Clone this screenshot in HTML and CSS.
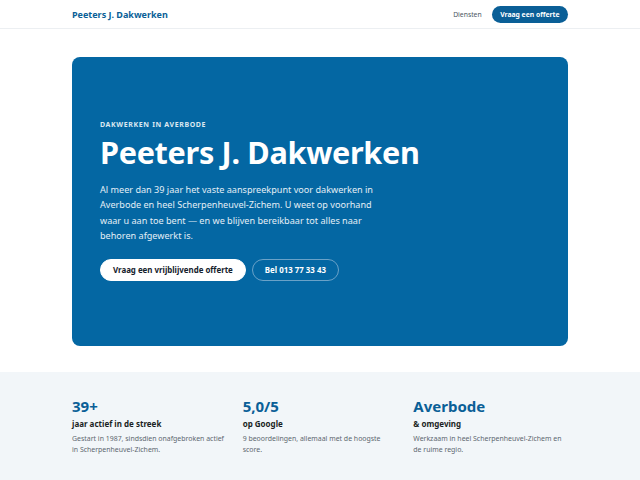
FILE: index.html
```html
<!DOCTYPE html>
<html lang="nl">
<head>
  <meta charset="UTF-8">
  <title>Peeters J. Dakwerken - Averbode</title>
  <link rel="stylesheet" href="styles.css">
</head>
<body>

  <header class="topbar">
    <div class="wrap topbar-inner">
      <a class="brand" href="#">Peeters J. Dakwerken</a>
      <nav class="nav">
        <a href="#diensten">Diensten</a>
        <a class="btn-small" href="#offerte">Vraag een offerte</a>
      </nav>
    </div>
  </header>

  <main>
    <section class="wrap hero-outer">
      <div class="hero">
        <p class="eyebrow">Dakwerken in Averbode</p>
        <h1>Peeters J. Dakwerken</h1>
        <p class="lead">Al meer dan 39 jaar het vaste aanspreekpunt voor dakwerken in Averbode en heel Scherpenheuvel-Zichem. U weet op voorhand waar u aan toe bent — en we blijven bereikbaar tot alles naar behoren afgewerkt is.</p>
        <div class="actions">
          <a class="btn btn-white" href="#offerte">Vraag een vrijblijvende offerte</a>
          <a class="btn btn-line" href="tel:013773343">Bel 013 77 33 43</a>
        </div>
      </div>
    </section>

    <section class="stats">
      <div class="wrap stats-grid">
        <div class="stat">
          <div class="stat-num">39+</div>
          <div class="stat-label">jaar actief in de streek</div>
          <p>Gestart in 1987, sindsdien onafgebroken actief in Scherpenheuvel-Zichem.</p>
        </div>
        <div class="stat">
          <div class="stat-num">5,0/5</div>
          <div class="stat-label">op Google</div>
          <p>9 beoordelingen, allemaal met de hoogste score.</p>
        </div>
        <div class="stat">
          <div class="stat-num">Averbode</div>
          <div class="stat-label">&amp; omgeving</div>
          <p>Werkzaam in heel Scherpenheuvel-Zichem en de ruime regio.</p>
        </div>
      </div>
    </section>
  </main>

</body>
</html>
```

FILE: styles.css
```css
* {
  box-sizing: border-box;
}

body {
  margin: 0;
  font-family: 'Noto Sans', 'Open Sans', sans-serif;
  color: #1a1f24;
  background-color: #fff;
}

a {
  text-decoration: none;
}

.wrap {
  max-width: 496px;
  margin: 0 auto;
}

/* top bar */
.topbar {
  border-bottom: 1px solid #eceff2;
}

.topbar-inner {
  height: 28px;
  display: flex;
  align-items: center;
  justify-content: space-between;
}

.brand {
  font-size: 9px;
  font-weight: 700;
  color: #0a5f97;
}

.nav {
  display: flex;
  align-items: center;
  gap: 10px;
}

.nav a {
  font-size: 6.8px;
  color: #4a5560;
}

.nav .btn-small {
  background-color: #0a5f97;
  color: #fff;
  font-weight: 700;
  padding: 0 8.5px;
  height: 17px;
  line-height: 17px;
  border-radius: 999px;
}

/* hero */
.hero-outer {
  padding-top: 28px;
}

.hero {
  background-color: #0467a3;
  border-radius: 8px;
  padding: 63px 28px 65px;
  color: #fff;
}

.eyebrow {
  margin: 0;
  font-size: 7px;
  line-height: 10px;
  font-weight: 700;
  letter-spacing: 0.09em;
  text-transform: uppercase;
  color: #dbe8f1;
}

.hero h1 {
  margin: 4px 0 12px;
  font-size: 30.6px;
  line-height: 36px;
  font-weight: 700;
  letter-spacing: -0.01em;
}

.lead {
  margin: 0;
  max-width: 290px;
  font-size: 9.1px;
  line-height: 15.3px;
  color: #e3eef6;
}

.actions {
  display: flex;
  gap: 6px;
  margin-top: 16px;
}

.btn {
  display: inline-block;
  height: 22px;
  line-height: 20px;
  padding: 0 12px;
  border-radius: 999px;
  font-size: 7.9px;
  font-weight: 700;
}

.btn-white {
  background-color: #fff;
  color: #14202b;
  border: 1px solid #fff;
}

.btn-line {
  color: #fff;
  border: 1px solid #6aa2c8;
}

/* stats */
.stats {
  margin-top: 26px;
  background-color: #f2f6f9;
  padding: 24px 0 28px;
}

.stats-grid {
  display: grid;
  grid-template-columns: repeat(3, 1fr);
  gap: 16px;
}

.stat-num {
  font-size: 15px;
  font-weight: 700;
  color: #0a5f97;
  line-height: 20px;
}

.stat-label {
  margin-top: 2px;
  font-size: 8px;
  line-height: 12px;
  font-weight: 700;
  color: #1a1f24;
}

.stat p {
  margin: 3px 0 0;
  font-size: 6.95px;
  line-height: 11px;
  color: #5d6770;
}
```
